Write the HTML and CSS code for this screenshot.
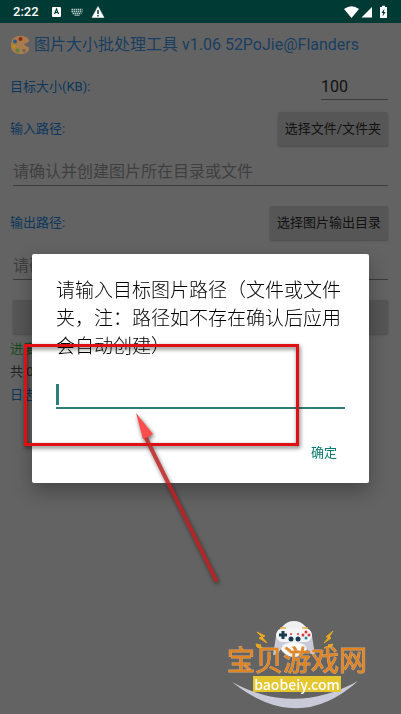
FILE: index.html
```html
<!DOCTYPE html>
<html lang="zh-CN">
<head>
<meta charset="utf-8">
<meta name="viewport" content="width=device-width, initial-scale=1">
<title>图片大小批处理工具</title>
<link rel="stylesheet" href="styles.css">
</head>
<body>
<header class="status">
  <span class="clock">2:22</span>
  <svg class="status-left" width="54" height="14" viewBox="0 0 54 14" aria-hidden="true">
    <rect x="1" y="2" width="9" height="10" rx="1" fill="#fff"/>
    <path d="M3.5 9 5.5 4 7.5 9M4.2 7.5h2.600" fill="none" stroke="#003a34" stroke-width="1.200"/>
    <path d="M20.500 4.500h11M20.500 6.500h11M21.500 8.500h9" stroke="#b5cbc8" stroke-width="1.300" stroke-dasharray="1.500 .6"/>
    <path d="M23.500 10.200h5" stroke="#b5cbc8"/>
    <path d="M47 1.500 53 12.500H41Z" fill="#fff" stroke="#fff" stroke-width=".5"/>
    <path d="M47 5v4M47 10v1.500" stroke="#003a34" stroke-width="1.500"/>
  </svg>
  <svg class="status-right" width="44" height="14" viewBox="0 0 44 14" aria-hidden="true">
    <path d="M0 4Q7.500-1.500 15 4L7.500 13Z" fill="#fff"/>
    <path d="M17.500 12.500 28 2v10.500Z" fill="#fff"/>
    <path d="M36 2h2V.8h3V2h2v11h-7Z" fill="#fff"/>
    <path d="M40.500 3.500 37.500 8h1.700l-.7 3.500L41.700 7h-1.800Z" fill="#003a34"/>
  </svg>
</header>
<main class="page">
  <h1 class="title">
    <svg class="palette" width="20" height="20" viewBox="0 0 20 20" aria-hidden="true">
      <path d="M12 1C5 0 .5 5 .8 11c.3 5 4 8 9 8 5.500 0 9.500-2 9.200-5.500-.2-2.500-4-1.500-4.500-3.500-.5-2.500 4.500-1.500 4.500-4.500C19 3 15.500 1.300 12 1Z" fill="#a87c4c"/>
      <circle cx="10.500" cy="4" r="2" fill="#8c2420"/><circle cx="5" cy="6.500" r="2" fill="#2c5c86"/>
      <circle cx="4" cy="11.500" r="1.800" fill="#b98d1f"/><circle cx="7.500" cy="15.500" r="2" fill="#5a8334"/>
      <circle cx="14" cy="15.500" r="1.500" fill="#636363"/>
    </svg>
    <span>图片大小批处理工具 v1.06 52PoJie@Flanders</span>
  </h1>
  <div class="row row-size">
    <label for="size">目标大小(KB):</label>
    <input class="field field-size" id="size" type="text" value="100">
  </div>
  <div class="row">
    <label for="input-path">输入路径:</label>
    <button class="btn" type="button">选择文件/文件夹</button>
  </div>
  <input class="field field-path" id="input-path" type="text" placeholder="请确认并创建图片所在目录或文件">
  <div class="row">
    <label for="output-path">输出路径:</label>
    <button class="btn" type="button">选择图片输出目录</button>
  </div>
  <input class="field field-path" id="output-path" type="text" placeholder="请确认并创建图片输出目录">
  <button class="btn btn-start" type="button" aria-label="开始"></button>
  <p class="line progress">进度:</p>
  <p class="line">共 0</p>
  <p class="line log">日志:</p>
</main>
<div class="overlay">
  <form class="dialog" role="dialog" aria-labelledby="dialog-title">
    <label class="dialog-title" id="dialog-title" for="path">请输入目标图片路径（文件或文件夹，注：路径如不存在确认后应用会自动创建）</label>
    <div class="entry"><span class="caret"></span><input id="path" type="text"></div>
    <button class="ok" type="button">确定</button>
    <svg class="marks" width="290" height="254" viewBox="0 0 290 254" aria-hidden="true">
      <g class="shadow">
        <rect x="7.500" y="9.500" width="272" height="99" fill="none" stroke="#df1014" stroke-width="3"/>
        <path d="M127 100 198 244" stroke="#c82020" stroke-opacity=".8" stroke-width="4" stroke-linecap="round"/>
        <path d="M118 77 135 98 130 101 125 103Z" fill="#ff4d4d"/>
      </g>
    </svg>
  </form>
</div>
<div class="watermark">
  <svg class="pad" width="134" height="92" viewBox="0 0 134 92" aria-hidden="true">
    <path d="M0 62Q62 96 126 61Q66 115 0 62Z" fill="#c9cad8"/>
    <ellipse cx="62" cy="19" rx="16" ry="18" fill="#f0f0f2"/>
    <path d="M44 16Q45 8 54 8H70Q79 8 80 16L83 35Q77 35 73 25Q62 18 51 25Q47 35 41 35Z" fill="#c9cad8"/>
    <path d="M44 15Q45 7 54 8H70Q79 7 80 15Q79 23 71 22H53Q45 23 44 15Z" fill="#f4f4f6"/>
    <ellipse cx="62" cy="29" rx="12" ry="6" fill="#fafafa"/>
    <path d="M48 8h6M70 8h6" stroke="#e5b53a" stroke-width="1.500"/>
    <path d="M47 15h8M51 11v8" stroke="#173c4e" stroke-width="3"/>
    <circle cx="59" cy="19" r="2.500" fill="#173c4e"/><circle cx="66" cy="19" r="2.500" fill="#173c4e"/>
    <circle cx="59" cy="14" r="1" fill="#d33"/><circle cx="66" cy="14" r="1" fill="#d33"/>
    <circle cx="74" cy="12" r="1.500" fill="#d33"/><circle cx="74" cy="18" r="1.500" fill="#289"/>
    <circle cx="71" cy="15" r="1.500" fill="#d33"/><circle cx="77" cy="15" r="1.500" fill="#d33"/>
    <path d="M25 12 33 16 30 17 35 23 27 18 30 17ZM24 24 29 25 28 26 32 29 25 27ZM101 11 94 17 97 17 92 23 99 18 97 17ZM101 24 96 25 97 26 92 28 99 27Z" fill="#eba91e" stroke="#eba91e"/>
  </svg>
  <strong class="brand">宝贝游戏网</strong>
  <span class="domain">baobeiy.com</span>
</div>
</body>
</html>
```
FILE: styles.css
```css
* { box-sizing: border-box; }
body {
  margin: 0;
  min-height: 100vh;
  background: #636363;
  color: #222;
  font: 13px/20px Roboto, "Noto Sans CJK SC", sans-serif;
}
button, input { font: inherit; color: inherit; border: 0; border-radius: 0; background: none; outline: 0; }
.status {
  display: flex;
  align-items: center;
  height: 23px;
  padding: 0 13px;
  background: #003a34;
  color: #fff;
}
.clock { font-size: 13px; font-weight: 500; }
.status-left { margin-left: 12px; }
.status-right { margin-left: auto; }
.page { display: flex; flex-direction: column; padding: 10px 13px 0 10px; }
.title {
  display: flex;
  align-items: center;
  gap: 4px;
  margin: 0;
  height: 24px;
  font-size: 16px;
  font-weight: 400;
  color: #193e60;
  white-space: nowrap;
}
.row { display: flex; align-items: center; justify-content: space-between; height: 34px; color: #0c365c; }
.row-size { margin: 13px 0 8px; }
.field { border-bottom: 1px solid #3b3b3b; font-size: 16px; padding: 0; }
.field-size { width: 67px; height: 25px; color: #111; }
.field-path { height: 28px; margin: 12px 0 20px 3px; }
.field::placeholder { color: #3f3f3f; opacity: 1; }
.btn {
  height: 34px;
  padding: 0 7px;
  border-radius: 2px;
  background: #565656;
  color: #111;
  box-shadow: 0 1px 2px #4c4c4c;
}
.btn-start { margin: 0 0 5px 3px; }
.line { margin: 0 0 3px; }
.progress { color: #1c481e; }
.log { color: #0c365c; }
.overlay {
  position: fixed;
  inset: 23px 0 0;
  display: flex;
  align-items: center;
  justify-content: center;
  padding: 0 32px;
}
.dialog {
  position: relative;
  display: flex;
  flex-direction: column;
  width: 100%;
  max-width: 480px;
  padding: 23px 24px 12px;
  border-radius: 2px;
  background: #fff;
  box-shadow: 0 8px 20px rgba(0, 0, 0, .3);
}
.dialog-title { font-size: 19px; line-height: 28px; font-weight: 300; color: #000; }
.entry {
  display: flex;
  align-items: flex-end;
  height: 32px;
  margin-top: 16px;
  padding-bottom: 2px;
  border-bottom: 2px solid #2b7f77;
}
.entry input { flex: 1; min-width: 0; }
.caret { width: 3px; height: 21px; background: #2b7f77; }
.ok { align-self: flex-end; height: 36px; margin-top: 26px; padding: 0 8px; color: #00796b; }
.marks { position: absolute; left: -14px; top: 82px; pointer-events: none; }
.shadow { filter: drop-shadow(1px 2px 2px rgba(0, 0, 0, .6)); }
.watermark {
  position: fixed;
  right: 34px;
  bottom: 3px;
  display: flex;
  flex-direction: column;
  align-items: center;
  padding-top: 28px;
  padding-bottom: 19px;
}
.pad { position: absolute; left: 5px; top: 0; }
.brand {
  position: relative;
  font-size: 28px;
  line-height: 28px;
  font-weight: 400;
  color: #e28420;
  -webkit-text-stroke: 1px #d8a878;
  paint-order: stroke fill;
}
.domain {
  position: relative;
  padding: 0 1px;
  background: #e5c62e;
  color: #fff;
  font: 500 14px/16px "Noto Sans CJK SC", sans-serif;
}
```
